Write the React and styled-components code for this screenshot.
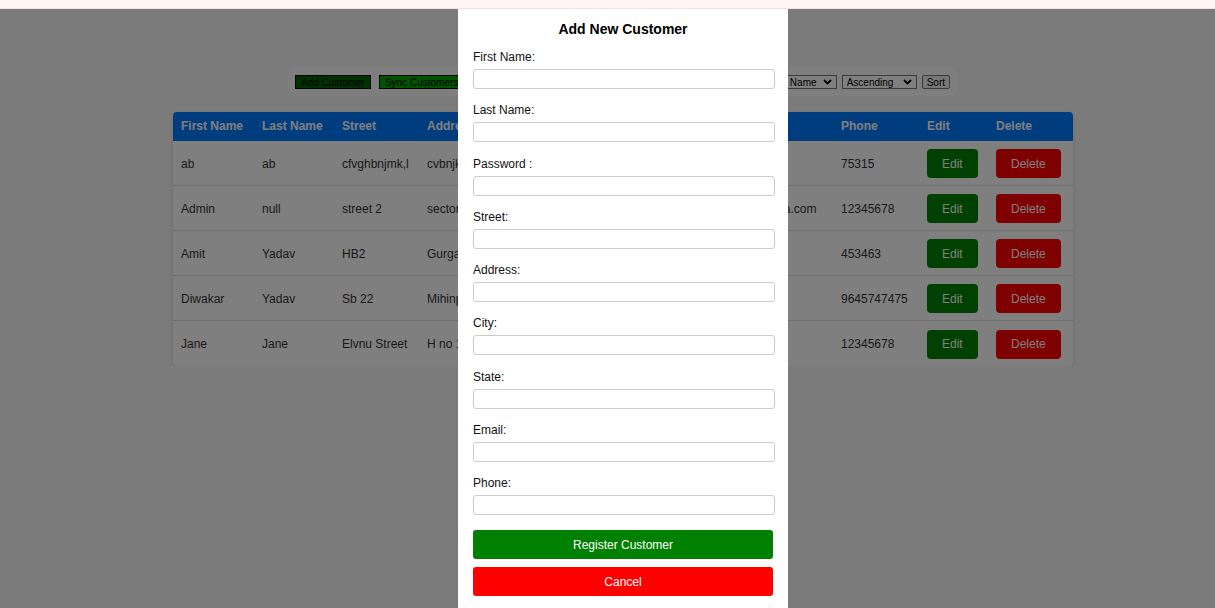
import React from "react";
import styled, { createGlobalStyle } from "styled-components";

const GlobalStyle = createGlobalStyle`
  html, body {
    margin: 0;
    padding: 0;
    background: #f6f6f6;
    font-family: "Liberation Sans", Arial, sans-serif;
    overflow: hidden;
  }
`;

const TopBar = styled.div`
  height: 8px;
  background: #fff5f5;
  border-bottom: 1px solid #f8dde3;
`;

const Main = styled.div`
  width: 1246px;
  display: flex;
  flex-direction: column;
  align-items: center;
`;

const Toolbar = styled.div`
  margin-top: 58px;
  width: 670px;
  box-sizing: border-box;
  padding: 8px 8px 7px 7px;
  border-radius: 8px;
  background: #fdfdfd;
  display: flex;
  align-items: center;
`;

const ToolButton = styled.button`
  height: 14px;
  padding: 0 5px;
  margin-right: ${({ gap }) => gap || 0}px;
  border: 1px solid #000;
  background: ${({ bg }) => bg || "#efefef"};
  color: #000;
  font-family: "Liberation Sans", Arial, sans-serif;
  font-size: 10px;
  line-height: 13px;
  border-radius: 0;
  cursor: pointer;
`;

const SortButton = styled.button`
  height: 14px;
  padding: 0 4px;
  border: 1px solid #767676;
  border-radius: 2px;
  background: #efefef;
  color: #000;
  font-family: "Liberation Sans", Arial, sans-serif;
  font-size: 10px;
  line-height: 13px;
`;

const SearchInput = styled.input`
  flex: 1;
  height: 14px;
  box-sizing: border-box;
  margin-right: 5px;
  border: 1px solid #767676;
  font-size: 10px;
  padding: 0 4px;
  font-family: "Liberation Sans", Arial, sans-serif;
`;

const SortLabel = styled.span`
  font-size: 10px;
  color: #000;
  margin-right: 5px;
`;

const SelectWrap = styled.span`
  position: relative;
  display: inline-flex;
  margin-right: 5px;
`;

const Select = styled.select`
  appearance: none;
  width: ${({ w }) => w}px;
  height: 14px;
  box-sizing: border-box;
  padding: 0 0 0 4px;
  border: 1px solid #767676;
  border-radius: 0;
  background: #fff;
  color: #000;
  font-family: "Liberation Sans", Arial, sans-serif;
  font-size: 10px;
  line-height: 13px;
`;

const Chevron = styled.svg`
  position: absolute;
  right: 5px;
  top: 4px;
  pointer-events: none;
`;

const Table = styled.div`
  margin-top: 16px;
  width: 900px;
  background: #fff;
  border-radius: 4px;
  overflow: hidden;
  box-shadow: 0 2px 4px rgba(0, 0, 0, 0.12);
`;

const columns = "81px 80px 85px 130px 90px 80px 114px 86px 69px 85px";

const HeadRow = styled.div`
  display: grid;
  grid-template-columns: ${columns};
  height: 29px;
  align-items: center;
  background: #007bff;
`;

const HeadCell = styled.div`
  padding: 0 8px 1px;
  color: #fff;
  font-weight: bold;
  font-size: 12px;
  white-space: nowrap;
  overflow: hidden;
`;

const Row = styled.div`
  display: grid;
  grid-template-columns: ${columns};
  height: 45px;
  box-sizing: border-box;
  align-items: center;
  border-bottom: ${({ last }) => (last ? "none" : "1px solid #dddddd")};
`;

const Cell = styled.div`
  padding: 1px 8px 0;
  color: #333;
  font-size: 12px;
  white-space: nowrap;
`;

const ActionButton = styled.button`
  height: 29px;
  padding: 0 15px;
  border: none;
  border-radius: 4px;
  background: ${({ danger }) => (danger ? "#ff0000" : "#008000")};
  color: #fff;
  font-family: "Liberation Sans", Arial, sans-serif;
  font-size: 12px;
  cursor: pointer;
`;

const Overlay = styled.div`
  position: fixed;
  top: 9px;
  left: 0;
  right: 0;
  bottom: 0;
  background: rgba(0, 0, 0, 0.5);
`;

const Modal = styled.div`
  position: absolute;
  top: 0;
  left: 458px;
  width: 330px;
  box-sizing: border-box;
  padding: 12px 15px 15px;
  background: #fff;
`;

const Title = styled.h2`
  margin: 0 0 13px;
  font-size: 14px;
  line-height: 16px;
  font-weight: bold;
  text-align: center;
  color: #000;
`;

const Field = styled.div`
  margin-bottom: 14.25px;
`;

const Label = styled.label`
  display: block;
  font-size: 12px;
  line-height: 15px;
  margin-bottom: 4px;
  color: #111;
`;

const Input = styled.input`
  display: block;
  width: 100%;
  height: 18px;
  padding: 0;
  margin: 0;
  border: 1px solid #ccc;
  border-radius: 3px;
  box-sizing: content-box;
  font-size: 12px;
`;

const Actions = styled.div`
  padding-top: 1px;
  display: flex;
  flex-direction: column;
  gap: 8px;
`;

const FormButton = styled.button`
  display: block;
  width: 100%;
  height: 29px;
  padding: 1px 0 0;
  border: none;
  border-radius: 3px;
  background: ${({ danger }) => (danger ? "#ff0000" : "#008000")};
  color: #fff;
  font-family: "Liberation Sans", Arial, sans-serif;
  font-size: 12px;
  cursor: pointer;
`;

const customers = [
  { first: "ab", last: "ab", street: "cfvghbnjmk,l", address: "cvbnjkl", city: "Delhi", state: "Delhi", email: "ab@ab.in", phone: "75315" },
  { first: "Admin", last: "null", street: "street 2", address: "sector 45", city: "Noida", state: "UP", email: "admin@sita.com", phone: "12345678" },
  { first: "Amit", last: "Yadav", street: "HB2", address: "Gurgaon", city: "Gurgaon", state: "HR", email: "amit@y.in", phone: "453463" },
  { first: "Diwakar", last: "Yadav", street: "Sb 22", address: "Mihinpur", city: "Agra", state: "UP", email: "diw@d.in", phone: "9645747475" },
  { first: "Jane", last: "Jane", street: "Elvnu Street", address: "H no 12", city: "Pune", state: "MH", email: "jane@j.in", phone: "12345678" },
];

const headers = ["First Name", "Last Name", "Street", "Address", "City", "State", "Email", "Phone", "Edit", "Delete"];

const fields = ["First Name:", "Last Name:", "Password :", "Street:", "Address:", "City:", "State:", "Email:", "Phone:"];

const DownArrow = () => (
  <Chevron width="9" height="6" viewBox="0 0 9 6">
    <path d="M1 1 L4.5 4.5 L8 1" fill="none" stroke="#000" strokeWidth="1.8" />
  </Chevron>
);

const App = () => {
  return (
    <>
      <GlobalStyle />
      <TopBar />
      <Main>
        <Toolbar>
          <ToolButton bg="#006400" gap={8}>Add Customer</ToolButton>
          <ToolButton bg="#00a800" gap={5}>Sync Customers</ToolButton>
          <SearchInput placeholder="Search" />
          <SortLabel>Sort by:</SortLabel>
          <SelectWrap>
            <Select w={74} defaultValue="first">
              <option value="first">First Name</option>
              <option value="last">Last Name</option>
            </Select>
            <DownArrow />
          </SelectWrap>
          <SelectWrap>
            <Select w={75} defaultValue="asc">
              <option value="asc">Ascending</option>
              <option value="desc">Descending</option>
            </Select>
            <DownArrow />
          </SelectWrap>
          <SortButton>Sort</SortButton>
        </Toolbar>
        <Table>
          <HeadRow>
            {headers.map((h) => (
              <HeadCell key={h}>{h}</HeadCell>
            ))}
          </HeadRow>
          {customers.map((c, i) => (
            <Row key={c.first} last={i === customers.length - 1}>
              <Cell>{c.first}</Cell>
              <Cell>{c.last}</Cell>
              <Cell>{c.street}</Cell>
              <Cell>{c.address}</Cell>
              <Cell>{c.city}</Cell>
              <Cell>{c.state}</Cell>
              <Cell>{c.email}</Cell>
              <Cell>{c.phone}</Cell>
              <Cell>
                <ActionButton>Edit</ActionButton>
              </Cell>
              <Cell>
                <ActionButton danger>Delete</ActionButton>
              </Cell>
            </Row>
          ))}
        </Table>
      </Main>
      <Overlay>
        <Modal>
          <Title>Add New Customer</Title>
          {fields.map((f) => (
            <Field key={f}>
              <Label>{f}</Label>
              <Input type="text" />
            </Field>
          ))}
          <Actions>
            <FormButton>Register Customer</FormButton>
            <FormButton danger>Cancel</FormButton>
          </Actions>
        </Modal>
      </Overlay>
    </>
  );
};

export default App;
